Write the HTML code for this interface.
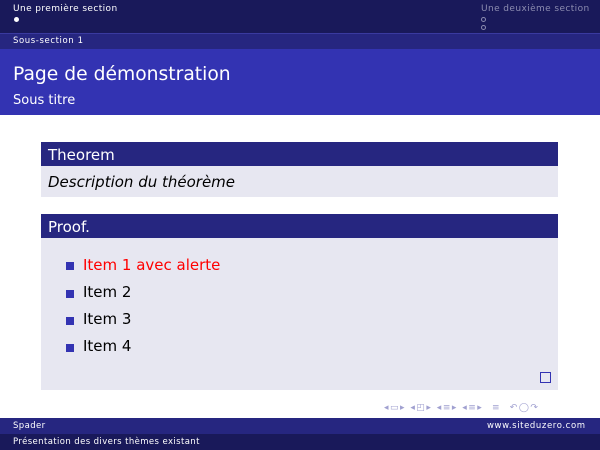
<!DOCTYPE html>
<html><head><meta charset="utf-8"><style>
*{margin:0;padding:0;box-sizing:border-box}
body{width:600px;height:450px;overflow:hidden;background:#fff;font-family:"DejaVu Sans","Liberation Sans",sans-serif;position:relative}
.a{position:absolute}
.s{font-size:9px;color:#fff;letter-spacing:0.4px}
</style></head><body>
<div class="a" style="left:0;top:0;width:600px;height:33px;background:#19195a"></div>
<div class="a s" style="left:13px;top:4px">Une première section</div>
<div class="a" style="left:14px;top:17px;width:5px;height:5px;border-radius:50%;background:#fff"></div>
<div class="a s" style="left:481px;top:4px;color:#8c8cb0">Une deuxième section</div>
<div class="a" style="left:481px;top:17px;width:5px;height:5px;border-radius:50%;border:1px solid #8c8cb0"></div>
<div class="a" style="left:481px;top:25px;width:5px;height:5px;border-radius:50%;border:1px solid #8c8cb0"></div>
<div class="a" style="left:0;top:33px;width:600px;height:16px;background:#262680;border-top:1px solid #3a3aa0"></div>
<div class="a s" style="left:13px;top:36px;font-size:8.5px;letter-spacing:0.6px">Sous-section 1</div>
<div class="a" style="left:0;top:49px;width:600px;height:66px;background:#3333b2"></div>
<div class="a" style="left:13px;top:63px;font-size:19px;color:#fff;transform:scaleX(0.985);transform-origin:left">Page de démonstration</div>
<div class="a" style="left:13px;top:93px;font-size:13px;color:#fff">Sous titre</div>

<div class="a" style="left:41px;top:142px;width:517px;height:24px;background:#262680"></div>
<div class="a" style="left:48px;top:146px;font-size:15px;color:#fff">Theorem</div>
<div class="a" style="left:41px;top:166px;width:517px;height:31px;background:#e7e7f1"></div>
<div class="a" style="left:48px;top:173px;font-size:15px;font-style:italic;color:#000">Description du théorème</div>

<div class="a" style="left:41px;top:214px;width:517px;height:24px;background:#262680"></div>
<div class="a" style="left:48px;top:218px;font-size:15px;color:#fff">Proof.</div>
<div class="a" style="left:41px;top:238px;width:517px;height:152px;background:#e7e7f1"></div>
<div class="a" style="left:66px;top:262px;width:8px;height:8px;background:#3333b2"></div>
<div class="a" style="left:83px;top:256px;font-size:15px;color:#f00">Item 1 avec alerte</div>
<div class="a" style="left:66px;top:290px;width:8px;height:8px;background:#3333b2"></div>
<div class="a" style="left:83px;top:283px;font-size:15px">Item 2</div>
<div class="a" style="left:66px;top:317px;width:8px;height:8px;background:#3333b2"></div>
<div class="a" style="left:83px;top:310px;font-size:15px">Item 3</div>
<div class="a" style="left:66px;top:344px;width:8px;height:8px;background:#3333b2"></div>
<div class="a" style="left:83px;top:337px;font-size:15px">Item 4</div>
<div class="a" style="left:540px;top:372px;width:11px;height:11px;border:1px solid #3333b2"></div>

<div class="a" style="left:384px;top:403px;font-size:9px;color:#a0a0d0;letter-spacing:1.5px">◂▭▸ ◂◰▸ ◂≡▸ ◂≡▸ &nbsp;≡ &nbsp;↶◯↷</div>
<div class="a" style="left:0;top:418px;width:600px;height:16px;background:#262680"></div>
<div class="a s" style="left:13px;top:421px;font-size:8.5px">Spader</div>
<div class="a s" style="left:487px;top:421px;font-size:8.5px;letter-spacing:0.6px">www.siteduzero.com</div>
<div class="a" style="left:0;top:434px;width:600px;height:16px;background:#19195a"></div>
<div class="a s" style="left:13px;top:437px;font-size:8.5px">Présentation des divers thèmes existant</div>
</body></html>
